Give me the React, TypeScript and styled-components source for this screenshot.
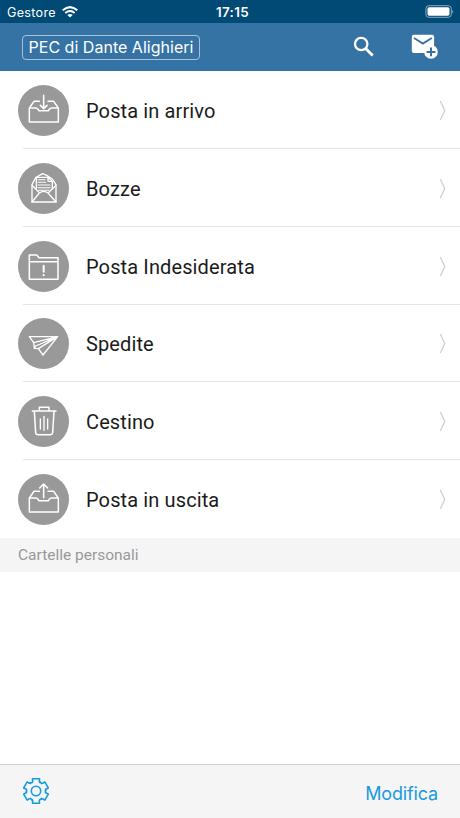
import React from 'react';
import styled, { createGlobalStyle } from 'styled-components';

const GlobalStyle = createGlobalStyle`
  * { box-sizing: border-box; }
  body { margin: 0; background: #fff; }
`;

const Screen = styled.div`
  display: flex;
  flex-direction: column;
  width: 460px;
  height: 818px;
  overflow: hidden;
  background: #fff;
  font-family: Roboto, sans-serif;
`;

const StatusBar = styled.div`
  display: grid;
  grid-template-columns: 1fr auto 1fr;
  align-items: center;
  height: 23px;
  padding: 1px 5px 0 7px;
  background: #004a75;
  color: #fff;
  font-family: Inter, sans-serif;
`;

const Carrier = styled.div`
  display: flex;
  align-items: center;
  gap: 6px;
  font-size: 12.6px;
  letter-spacing: 0.3px;
`;

const Clock = styled.div`
  padding-left: 3px;
  font-size: 13.4px;
  font-weight: 600;
  letter-spacing: 0.35px;
`;

const Battery = styled.svg`
  justify-self: end;
  margin-top: -1px;
`;

const Header = styled.header`
  display: flex;
  align-items: center;
  height: 48px;
  padding: 0 22px;
  background: #3673a5;
`;

const Account = styled.div`
  display: flex;
  align-items: center;
  justify-content: center;
  width: 178px;
  height: 25px;
  border: 1px solid #a6c3da;
  border-radius: 4px;
  color: #fff;
  font-family: Inter, sans-serif;
  font-size: 16px;
  letter-spacing: 0.02px;
  white-space: nowrap;
`;

const HeaderActions = styled.div`
  display: flex;
  align-items: center;
  gap: 37px;
  margin: -1px 0 0 auto;
`;

const FolderList = styled.main`
  display: grid;
  grid-template-rows: repeat(6, 1fr);
  height: 467px;
`;

const Row = styled.div`
  display: flex;
  align-items: center;
  position: relative;
  padding: 1px 13px 0 18px;

  &:not(:last-child)::after {
    content: '';
    position: absolute;
    left: 23px;
    right: 0;
    bottom: 0;
    height: 1px;
    background: #e6e6e6;
  }
`;

const Disc = styled.svg`
  width: 51px;
  height: 51px;
  border-radius: 50%;
  background: #999;
  fill: none;
  stroke: #fff;
  stroke-width: 4.6;
  stroke-linejoin: round;
  stroke-linecap: round;
`;

const FolderName = styled.div`
  flex: 1;
  margin: 1px 0 0 17px;
  color: #1b1b1b;
  font-size: 20px;
  letter-spacing: 0.12px;
`;

const SectionTitle = styled.div`
  display: flex;
  align-items: center;
  height: 34px;
  padding: 0 18px;
  background: #f5f5f5;
  color: #999;
  font-size: 15.5px;
`;

const Toolbar = styled.footer`
  display: flex;
  align-items: center;
  justify-content: space-between;
  height: 54px;
  margin-top: auto;
  padding: 0 22px;
  border-top: 1px solid #d0d0d0;
  background: #f5f5f5;
`;

const GearIcon = styled.svg`
  margin-top: -2px;
`;

const EditButton = styled.button`
  margin: 3px 0 0;
  padding: 0;
  border: 0;
  background: none;
  color: #179ade;
  font-family: Inter, sans-serif;
  font-size: 18px;
  letter-spacing: -0.15px;
`;

const Tray = () => (
  <path d="M58 95L72 75H88M114 75H131L145 95V137H58V95H77Q82 95 84 99L87 103H115L118 99Q120 95 125 95H145" />
);

const icons: Record<string, React.ReactNode> = {
  inbox: (
    <>
      <Tray />
      <path d="M101 57V96M91 87L101 97L111 87" />
    </>
  ),
  drafts: (
    <>
      <path d="M77 68L66 89V141H138V89L127 72L110 61L98 56L77 68" strokeWidth="4" />
      <path d="M66 91L88 113M138 91L115 113M66 141L88 114Q101 104 114 114L138 141" strokeWidth="4" />
      <path d="M79 101V67H114L127 79V101M114 67V79H127" strokeWidth="4" />
      <path d="M84 74H105M84 82H107M84 90H120M84 98H120M86 106H117" strokeWidth="3.2" />
    </>
  ),
  spam: (
    <>
      <path d="M58 139V66H80L87 74H144V139H58M58 86H144" />
      <path d="M101 98V116M101 126V127" strokeWidth="6" />
    </>
  ),
  sent: (
    <path d="M58 80H143L99 135L85 116L73 115L71 98L58 80M71 98L143 80L77 108L73 115M85 116L143 80" strokeWidth="4" />
  ),
  trash: (
    <>
      <path d="M67 69H138M88 67V58H117V67M73 70L77 134Q78 140 84 140H121Q127 140 128 134L132 70" />
      <path d="M91 93V123M102 85V127M113 93V123" strokeWidth="4" />
    </>
  ),
  outbox: (
    <>
      <Tray />
      <path d="M101 94V54M89 65L101 53L113 65" />
    </>
  ),
};

const folders = [
  { name: 'Posta in arrivo', icon: 'inbox', box: '24 26 153 153' },
  { name: 'Bozze', icon: 'drafts', box: '24 24 153 153' },
  { name: 'Posta Indesiderata', icon: 'spam', box: '24 24 153 153' },
  { name: 'Spedite', icon: 'sent', box: '24 24 153 153' },
  { name: 'Cestino', icon: 'trash', box: '24 24 153 153' },
  { name: 'Posta in uscita', icon: 'outbox', box: '24 23 153 153' },
];

const gearOutline = [0, 60, 120, 180, 240, 300]
  .flatMap((tooth) =>
    [
      [-36, 10],
      [-24, 9.3],
      [-19, 10.2],
      [-16, 12.7],
      [16, 12.7],
      [19, 10.2],
      [24, 9.3],
    ].map(([offset, radius]) => {
      const angle = ((tooth + offset) * Math.PI) / 180;
      return `${(14 + radius * Math.sin(angle)).toFixed(2)},${(14 - radius * Math.cos(angle)).toFixed(2)}`;
    }),
  )
  .join(' ');

export default function App() {
  return (
    <Screen>
      <GlobalStyle />
      <StatusBar>
        <Carrier>
          Gestore
          <svg width="16" height="12" viewBox="0 0 16 12" fill="none" stroke="#fff" strokeWidth="2.1">
            <path d="M.7 4.3Q8-2.1 15.3 4.3M3.3 7Q8 3 12.7 7" />
            <path d="M5.4 8.9Q8 6.9 10.6 8.9L8 11.5Z" fill="#fff" stroke="none" />
          </svg>
        </Carrier>
        <Clock>17:15</Clock>
        <Battery width="30" height="13" viewBox="0 0 30 13">
          <rect x=".9" y=".7" width="25.4" height="11.6" rx="3" fill="none" stroke="#8cabc0" />
          <rect x="2.5" y="2.2" width="22" height="8.6" rx="1.7" fill="#fff" />
          <path d="M27.3 4.5q1.8 2 0 4z" fill="#8cabc0" />
        </Battery>
      </StatusBar>
      <Header>
        <Account>PEC di Dante Alighieri</Account>
        <HeaderActions>
          <svg width="21" height="21" viewBox="0 0 21 21" fill="none" stroke="#fff" strokeWidth="2.3">
            <circle cx="8.2" cy="8" r="6.2" />
            <path d="M12.6 12.4L19.7 19.5" strokeWidth="2.8" />
          </svg>
          <svg width="27" height="25" viewBox="0 0 27 25">
            <rect x=".8" y=".7" width="22.3" height="18.2" rx="2" fill="#fff" />
            <path d="M3 4L11.9 9.6L20.8 4" fill="none" stroke="#3673a5" strokeWidth="1.8" />
            <circle cx="20" cy="17.9" r="6.8" fill="#fff" />
            <path d="M20 13.5V22.3M15.6 17.9H24.4" stroke="#3673a5" strokeWidth="2" />
          </svg>
        </HeaderActions>
      </Header>
      <FolderList>
        {folders.map((folder) => (
          <Row key={folder.name}>
            <Disc viewBox={folder.box}>{icons[folder.icon]}</Disc>
            <FolderName>{folder.name}</FolderName>
            <svg width="8" height="21" viewBox="0 0 8 21" fill="none" stroke="#cfcfcf" strokeWidth="1.3">
              <path d="M1.3 1L5.8 10.5L1.3 20" />
            </svg>
          </Row>
        ))}
      </FolderList>
      <SectionTitle>Cartelle personali</SectionTitle>
      <Toolbar>
        <GearIcon width="28" height="28" viewBox="0 0 28 28" fill="none" stroke="#179ade" strokeWidth="1.6" strokeLinejoin="round">
          <polygon points={gearOutline} />
          <circle cx="14" cy="14" r="4.7" />
        </GearIcon>
        <EditButton>Modifica</EditButton>
      </Toolbar>
    </Screen>
  );
}
